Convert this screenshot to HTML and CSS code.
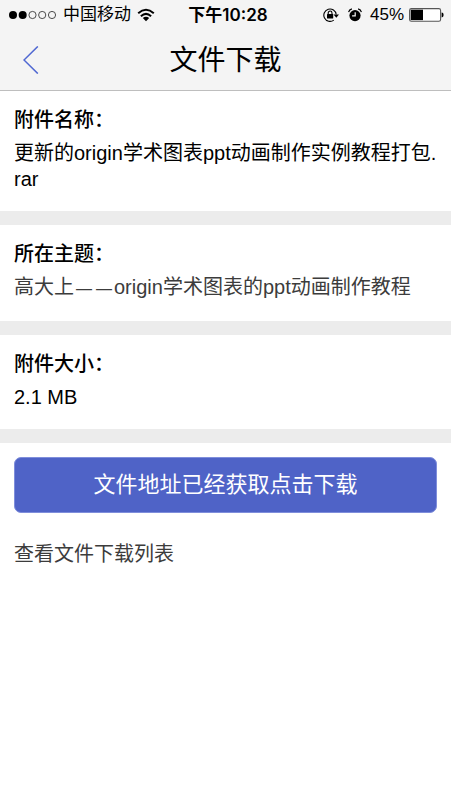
FILE: index.html
```html
<!DOCTYPE html>
<html lang="zh-CN">
<head>
<meta charset="utf-8">
<meta name="viewport" content="width=device-width, initial-scale=1">
<title>文件下载</title>
<link rel="stylesheet" href="styles.css">
</head>
<body>
<header class="top">
  <div class="status">
    <div class="status-side">
      <svg class="signal" width="49" height="10" viewBox="0 0 49 10" aria-hidden="true">
        <circle cx="5" cy="5" r="4"/><circle cx="14.7" cy="5" r="4"/>
        <g fill="none" stroke="#222" stroke-width=".8"><circle cx="24.5" cy="5" r="3.6"/><circle cx="34.2" cy="5" r="3.6"/><circle cx="44" cy="5" r="3.6"/></g>
      </svg>
      <span>中国移动</span>
      <svg class="wifi" width="18" height="14" viewBox="0 0 18 14" aria-hidden="true">
        <g fill="none" stroke="#000" stroke-width="2"><path d="M1.2 5.2Q9-1.6 16.8 5.2"/><path d="M3.9 8.2Q9 3.6 14.1 8.2"/></g>
        <path d="M5.8 10.1Q9 7.4 12.2 10.1L9 13.2Z"/>
      </svg>
    </div>
    <time class="clock">下午10:28</time>
    <div class="status-side status-end">
      <svg class="lock" width="17" height="14" viewBox="0 0 17 14" aria-hidden="true">
        <path d="M10.8 12.1A6.2 6.2 0 1 1 13.2 6.5" fill="none" stroke="#000" stroke-width="1.1"/>
        <path d="M10.6 6.5H16L13.3 9.8Z"/>
        <rect x="4" y="6" width="6.2" height="4.5" rx=".5"/>
        <path d="M5.2 6.2V4.9a1.9 1.9 0 0 1 3.8 0v1.3" fill="none" stroke="#000" stroke-width="1.1"/>
      </svg>
      <svg class="alarm" width="14" height="14" viewBox="0 0 14 14" aria-hidden="true">
        <circle cx="7" cy="7.6" r="5.6"/>
        <path d="M.6 4.1Q1.2 1.5 3.9.9M10.1.9Q12.8 1.5 13.4 4.1" fill="none" stroke="#000" stroke-width="1.2"/>
        <path d="M7.2 4.2v3.7H4.1" fill="none" stroke="#f4f4f4" stroke-width="1.2"/>
      </svg>
      <span>45%</span>
      <svg class="battery" width="35" height="14" viewBox="0 0 35 14" aria-hidden="true">
        <rect x=".6" y=".6" width="31" height="12.6" rx="1.8" fill="#fff" stroke="#555" stroke-width="1.1"/>
        <rect x="1.7" y="1.7" width="12.3" height="10.4"/>
        <path d="M32.6 4.6q2 0 2 2.4t-2 2.4Z"/>
      </svg>
    </div>
  </div>
  <div class="nav">
    <button class="back" type="button" aria-label="返回">
      <svg width="16" height="28" viewBox="0 0 16 28" aria-hidden="true"><path d="M14.8.4L1 14l13.8 13.6" fill="none" stroke="#5068d2" stroke-width="1.5"/></svg>
    </button>
    <h1 class="title">文件下载</h1>
  </div>
</header>
<main>
  <section class="block">
    <h2 class="label">附件名称：</h2>
    <p class="value">更新的origin学术图表ppt动画制作实例教程打包.<wbr>rar</p>
  </section>
  <section class="block">
    <h2 class="label">所在主题：</h2>
    <p class="value"><a class="link" href="#topic">高大上<span class="dash">—</span><span class="dash">—</span>origin学术图表的ppt动画制作教程</a></p>
  </section>
  <section class="block">
    <h2 class="label">附件大小：</h2>
    <p class="value">2.1 MB</p>
  </section>
  <div class="actions">
    <button class="download" type="button">文件地址已经获取点击下载</button>
    <a class="link" href="#downloads">查看文件下载列表</a>
  </div>
</main>
</body>
</html>
```
FILE: styles.css
```css
* {
  box-sizing: border-box;
}

body {
  margin: 0;
  background: #fff;
  color: #000;
  font: 20px/26px "Liberation Sans", "Noto Sans CJK SC", sans-serif;
}

button {
  border: 0;
  padding: 0;
  font-family: inherit;
  cursor: pointer;
}

.top {
  background: #f4f4f4;
  border-bottom: 1px solid #bebebe;
}

.status {
  display: grid;
  grid-template-columns: 1fr auto 1fr;
  align-items: center;
  height: 30px;
  padding: 0 7px 0 8px;
  font-size: 17px;
}

.status-side {
  display: flex;
  align-items: center;
  gap: 6px;
}

.status-end {
  justify-content: flex-end;
  gap: 5px;
}

.alarm {
  margin: 0 3px;
}

.clock {
  padding-left: 4px;
  font-family: Inter, "Noto Sans CJK SC", sans-serif;
  font-weight: 600;
}

.nav {
  display: grid;
  grid-template-columns: 48px 1fr 48px;
  align-items: center;
  height: 60px;
}

.back {
  display: flex;
  align-items: center;
  height: 60px;
  padding-left: 23px;
  background: none;
}

.title {
  margin: 0;
  padding-top: 2px;
  text-align: center;
  font-size: 28px;
  line-height: 40px;
  font-weight: 400;
}

.block {
  padding: 14px 14px 19px;
  border-bottom: 14px solid #ececec;
}

.label {
  margin: 0 0 7px;
  font-size: 20px;
  line-height: 28px;
  font-weight: 500;
  font-family: "Noto Sans CJK SC", sans-serif;
}

.value {
  margin: 0;
}

.link {
  color: #3c3c3c;
  text-decoration: none;
}

.dash {
  margin: 0 2px;
  font-size: 16px;
}

.actions {
  display: flex;
  flex-direction: column;
  align-items: flex-start;
  gap: 28px;
  padding: 14px;
}

.download {
  width: 100%;
  height: 56px;
  padding-bottom: 6px;
  border: 1px solid #7f8edb;
  border-radius: 7px;
  background: #4f63c7;
  color: #fff;
  font-size: 22px;
}
```
